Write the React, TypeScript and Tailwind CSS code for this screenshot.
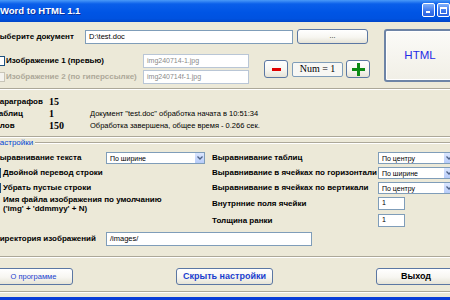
import React from "react";

function XPButton({ className, children }: { className: string; children?: React.ReactNode }) {
  return (
    <div
      className={
        "flex items-center justify-center rounded-[3px] border border-[#5b77a3] bg-[linear-gradient(180deg,#ffffff_0%,#f7f6f1_55%,#e6e3d6_100%)] " +
        className
      }
    >
      {children}
    </div>
  );
}

function Chevron() {
  return (
    <svg width="6" height="4" viewBox="0 0 6 4">
      <path d="M0.5 0.5 L3 3 L5.5 0.5" fill="none" stroke="#4d6185" strokeWidth="1.3" />
    </svg>
  );
}

function Select({ className, text }: { className: string; text: string }) {
  return (
    <div className={"h-[12px] bg-white border border-[#7f9db9] flex items-center " + className}>
      <span className="flex-1 pl-[3px] text-[7px] leading-none whitespace-nowrap">{text}</span>
      <div className="w-[9px] h-full bg-[linear-gradient(180deg,#dbe6fe,#b7ccf9)] flex items-center justify-center">
        <Chevron />
      </div>
    </div>
  );
}

function Check() {
  return <div className="w-[10px] h-[10px] shrink-0 bg-white border border-[#1c5180]" />;
}

function Etched({ className }: { className: string }) {
  return <div className={"h-[2px] border-t border-[#aca899] border-b border-b-white " + className} />;
}

export default function App() {
  return (
    <div className="w-[450px] h-[300px] overflow-hidden bg-[#ece9d8] flex flex-col font-['Liberation_Sans',Arial,sans-serif] text-black">
      {/* Title bar */}
      <div className="h-[22px] shrink-0 flex items-center bg-[linear-gradient(180deg,#4a9af8_0%,#0a5fea_18%,#0055e5_55%,#0052e0_85%,#0045c8_100%)]">
        <span className="text-white font-bold text-[9.5px] leading-none [text-shadow:1px_1px_0_#0b2f9c] whitespace-nowrap">
          Word to HTML 1.1
        </span>
        <div className="ml-auto flex gap-[2px] self-start mt-[3px]">
          <div className="w-[13px] h-[14px] rounded-[2px] border border-white bg-[linear-gradient(180deg,#7fb0fb,#3a74ec_60%,#2a62e0)] flex items-end pl-[3px] pb-[3px]">
            <div className="w-[4px] h-[2px] bg-white" />
          </div>
          <div className="w-[13px] h-[14px] rounded-[2px] border border-white bg-[linear-gradient(180deg,#7fb0fb,#3a74ec_60%,#2a62e0)] flex items-center justify-center">
            <div className="w-[7px] h-[7px] border border-white border-t-2" />
          </div>
        </div>
      </div>

      {/* Body */}
      <div className="flex-1 flex flex-col ml-[-6px] w-[462px]">
        {/* top section */}
        <div className="flex mt-[7px]">
          <div className="w-[376px] flex flex-col">
            <div className="flex items-center h-[15px]">
              <div className="w-[91px] text-[8px] font-bold whitespace-nowrap">Выберите документ</div>
              <div className="w-[208px] h-[14px] bg-white border border-[#7f9db9] flex items-center px-[3px] text-[7.5px]">
                D:\test.doc
              </div>
              <XPButton className="ml-[4px] w-[71px] h-[15px] text-[7px] leading-none pb-[3px]">...</XPButton>
            </div>
            <div className="flex mt-[10px] items-center">
              <div className="flex flex-col gap-[2px]">
                <div className="flex items-center h-[14px]">
                  <div className="w-[149px] flex items-center">
                    <div className="ml-[1px]">
                      <Check />
                    </div>
                    <span className="ml-[1px] text-[8px] font-bold whitespace-nowrap">Изображение 1 (превью)</span>
                  </div>
                  <div className="w-[106px] h-[14px] bg-white border border-[#b9c6d6] flex items-center px-[3px] text-[7px] text-[#8a8a8a]">
                    img240714-1.jpg
                  </div>
                </div>
                <div className="flex items-center h-[14px]">
                  <div className="w-[149px] flex items-center">
                    <div className="ml-[1px] w-[10px] h-[10px] shrink-0 bg-[#f4f3ee] border border-[#c8c5b8]" />
                    <span className="ml-[1px] text-[8px] font-bold whitespace-nowrap text-[#aca899]">
                      Изображение 2 (по гиперссылке)
                    </span>
                  </div>
                  <div className="w-[106px] h-[14px] bg-white border border-[#b9c6d6] flex items-center px-[3px] text-[7px] text-[#8a8a8a]">
                    img240714f-1.jpg
                  </div>
                </div>
              </div>
              <div className="flex items-center ml-[15px]">
                <XPButton className="w-[24px] h-[18px] border-[#3f5f8f]">
                  <div className="w-[9px] h-[3px] bg-[#e00000]" />
                </XPButton>
                <div className="ml-[4px] w-[51px] h-[15px] rounded-[2px] border border-[#7f9db9] bg-[#f7f7f4] flex items-center justify-center font-['Liberation_Serif',serif] text-[10px] leading-none whitespace-nowrap">
                  Num = 1
                </div>
                <XPButton className="ml-[3px] w-[24px] h-[18px] border-[#3f5f8f]">
                  <svg width="13" height="13" viewBox="0 0 13 13">
                    <rect x="5" y="0" width="3" height="13" fill="#0c8a14" />
                    <rect x="0" y="5" width="13" height="3" fill="#0c8a14" />
                  </svg>
                </XPButton>
              </div>
            </div>
          </div>
          <div className="ml-[14px] w-[80px] h-[53px] rounded-[3px] border-2 border-[#6d84a6] shadow-[inset_0_0_0_1px_#ffffff] bg-[linear-gradient(180deg,#fbfbf8,#f1efe6)] flex items-center justify-center">
            <span className="text-[11.5px] text-[#1f2ce6] leading-none">HTML</span>
          </div>
        </div>

        <Etched className="mt-[4px]" />

        {/* stats */}
        <div className="grid grid-cols-[55px_41px_1fr] grid-rows-[12px_12px_12px] mt-[6px] items-center">
          <div className="text-[8px] font-bold">Параграфов</div>
          <div className="font-['Liberation_Serif',serif] font-bold text-[10px] leading-none">15</div>
          <div />
          <div className="text-[8px] font-bold">Таблиц</div>
          <div className="font-['Liberation_Serif',serif] font-bold text-[10px] leading-none">1</div>
          <div className="text-[7.5px] whitespace-nowrap text-black">Документ "test.doc" обработка начата в 10:51:34</div>
          <div className="text-[8px] font-bold">Слов</div>
          <div className="font-['Liberation_Serif',serif] font-bold text-[10px] leading-none">150</div>
          <div className="text-[7.5px] whitespace-nowrap text-black">Обработка завершена, общее время - 0.266 сек.</div>
        </div>

        <Etched className="mt-[4px]" />

        {/* group caption */}
        <div className="flex items-center h-[10px]">
          <span className="text-[8px] text-[#0046d5] leading-none pr-[2px]">Настройки</span>
          <Etched className="flex-1" />
        </div>

        {/* settings */}
        <div className="flex flex-col mt-[4px]">
          <div className="flex items-center h-[12px]">
            <div className="w-[218px] flex items-center">
              <div className="w-[112px] text-[8px] font-bold whitespace-nowrap">Выравнивание текста</div>
              <Select className="w-[99px]" text="По ширине" />
            </div>
            <div className="w-[166px] text-[8px] font-bold whitespace-nowrap">Выравнивание таблиц</div>
            <Select className="w-[76px]" text="По центру" />
          </div>
          <div className="flex items-center h-[12px] mt-[3px]">
            <div className="w-[218px] flex items-center">
              <div className="ml-[-3px]">
                <Check />
              </div>
              <span className="ml-[2px] text-[8px] font-bold whitespace-nowrap">Двойной перевод строки</span>
            </div>
            <div className="w-[166px] text-[8px] font-bold whitespace-nowrap">Выравнивание в ячейках по горизонтали</div>
            <Select className="w-[76px]" text="По ширине" />
          </div>
          <div className="flex items-center h-[12px] mt-[3px]">
            <div className="w-[218px] flex items-center">
              <div className="ml-[-3px]">
                <Check />
              </div>
              <span className="ml-[2px] text-[8px] font-bold whitespace-nowrap">Убрать пустые строки</span>
            </div>
            <div className="w-[166px] text-[8px] font-bold whitespace-nowrap">Выравнивание в ячейках по вертикали</div>
            <Select className="w-[76px]" text="По центру" />
          </div>
          <div className="flex items-center h-[19px]">
            <div className="w-[218px] pl-[9px] text-[8px] font-bold leading-[9px] whitespace-nowrap">
              <div>Имя файла изображения по умолчанию</div>
              <div>('img' + 'ddmmyy' + N)</div>
            </div>
            <div className="w-[166px] text-[8px] font-bold whitespace-nowrap">Внутрнние поля ячейки</div>
            <div className="w-[27px] h-[13px] bg-white border border-[#7f9db9] flex items-center px-[3px] text-[7px]">1</div>
          </div>
          <div className="flex items-center h-[13px] mt-[1px]">
            <div className="w-[218px]" />
            <div className="w-[166px] text-[8px] font-bold whitespace-nowrap">Толщина ранки</div>
            <div className="w-[27px] h-[13px] bg-white border border-[#7f9db9] flex items-center px-[3px] text-[7px]">1</div>
          </div>
          <div className="flex items-center h-[14px] mt-[5px]">
            <div className="w-[112px] text-[8px] font-bold whitespace-nowrap">Директория изображений</div>
            <div className="w-[206px] h-[14px] bg-white border border-[#7f9db9] flex items-center px-[3px] text-[7.5px]">
              /images/
            </div>
          </div>
        </div>

        <Etched className="mt-[10px]" />

        {/* bottom buttons */}
        <div className="flex items-center mt-[10px]">
          <XPButton className="w-[79px] h-[17px] text-[7.5px] text-[#1a3fcf] leading-none">О программе</XPButton>
          <XPButton className="ml-[103px] w-[97px] h-[17px] text-[9px] font-bold text-[#1a3fcf] leading-none whitespace-nowrap">
            Скрыть настройки
          </XPButton>
          <XPButton className="ml-[103px] w-[80px] h-[17px] text-[9px] font-bold leading-none">Выход</XPButton>
        </div>

        <Etched className="mt-[6px]" />
      </div>

      <div className="h-[3px] shrink-0 bg-[#0a3ed8]" />
    </div>
  );
}
